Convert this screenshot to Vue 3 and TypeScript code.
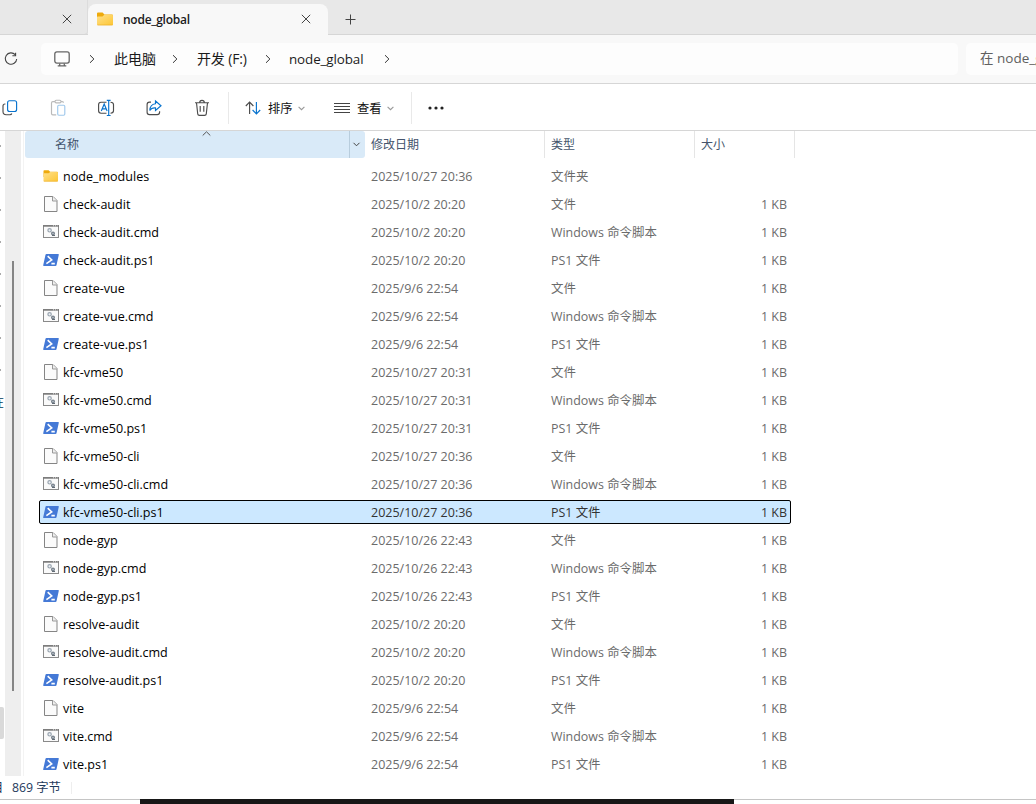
<script setup lang="ts">
type Kind = 'folder' | 'file' | 'cmd' | 'ps1'

interface Entry {
  name: string
  date: string
  kind: Kind
  selected?: boolean
}

const typeLabels: Record<Kind, string> = {
  folder: '文件夹',
  file: '文件',
  cmd: 'Windows 命令脚本',
  ps1: 'PS1 文件',
}

function scripts(base: string, date: string, selected?: Kind): Entry[] {
  return [
    { name: base, date, kind: 'file' },
    { name: base + '.cmd', date, kind: 'cmd' },
    { name: base + '.ps1', date, kind: 'ps1', selected: selected === 'ps1' },
  ]
}

const entries: Entry[] = [
  { name: 'node_modules', date: '2025/10/27 20:36', kind: 'folder' },
  ...scripts('check-audit', '2025/10/2 20:20'),
  ...scripts('create-vue', '2025/9/6 22:54'),
  ...scripts('kfc-vme50', '2025/10/27 20:31'),
  ...scripts('kfc-vme50-cli', '2025/10/27 20:36', 'ps1'),
  ...scripts('node-gyp', '2025/10/26 22:43'),
  ...scripts('resolve-audit', '2025/10/2 20:20'),
  ...scripts('vite', '2025/9/6 22:54'),
]
</script>

<template>
  <div class="window">
    <header class="tabs">
      <div class="tab-prev">
        <svg class="x" viewBox="0 0 10 10"><path d="M.8.8l8.4 8.4M9.2.8L.8 9.2" /></svg>
      </div>
      <div class="tab-active">
        <svg class="folder-lg" viewBox="0 0 16 14">
          <defs>
            <linearGradient id="fg" x1="0" y1="0" x2="1" y2="1">
              <stop offset="0" stop-color="#ffe08a" />
              <stop offset="1" stop-color="#fdc634" />
            </linearGradient>
          </defs>
          <path d="M0 1.5Q0 .5 1 .5h4.6l1.8 2H15q1 0 1 1V8H0z" fill="#eeaa0c" />
          <path d="M0 5.2q0-.8.8-.8h4.7l1.8-1.7H15q1 0 1 1v8.8q0 .8-1 .8H1q-1 0-1-1z" fill="url(#fg)" />
          <path d="M.2 12.7q.2.6.9.6h13.8q.8 0 .9-.6z" fill="#e8a21a" />
        </svg>
        <span class="tab-title">node_global</span>
        <svg class="x" viewBox="0 0 10 10"><path d="M.8.8l8.4 8.4M9.2.8L.8 9.2" /></svg>
      </div>
      <svg class="plus" viewBox="0 0 11 11"><path d="M5.5.5v10M.5 5.5h10" /></svg>
    </header>

    <div class="address">
      <svg class="refresh" viewBox="0 0 14 14">
        <path d="M11.2 2.7A5.7 5.7 0 1 0 12.7 7M11.6.7v3.1H8.4" />
      </svg>
      <nav class="crumbs">
        <svg class="monitor" viewBox="0 0 16 16">
          <rect x=".8" y=".9" width="14.4" height="11.2" rx="2" />
          <path d="M5.7 12.4v2.2M10.3 12.4v2.2M3.7 14.9h8.6" />
        </svg>
        <svg class="chev" viewBox="0 0 6 10"><path d="M1 1.2L4.9 5 1 8.8" /></svg>
        <span class="pc">此电脑</span>
        <svg class="chev" viewBox="0 0 6 10"><path d="M1 1.2L4.9 5 1 8.8" /></svg>
        <span class="drive">开发 (F:)</span>
        <svg class="chev" viewBox="0 0 6 10"><path d="M1 1.2L4.9 5 1 8.8" /></svg>
        <span class="current">node_global</span>
        <svg class="chev" viewBox="0 0 6 10"><path d="M1 1.2L4.9 5 1 8.8" /></svg>
      </nav>
      <div class="search">在 node_global 中搜索</div>
    </div>

    <div class="toolbar">
      <svg class="tool copy" viewBox="0 0 18 18">
        <path class="g" d="M4.400 5H4Q2 5 2 7v5.500q0 3.200 3.200 3.200H9q1.400 0 1.800-1.200" />
        <rect class="b" x="6.600" y="1.700" width="9" height="10.800" rx="2" />
      </svg>
      <svg class="tool faded" viewBox="0 0 18 18">
        <path class="g" d="M6 2.600H3.800Q2.500 2.600 2.500 4v10.600q0 1.300 1.300 1.300h3.400M12 2.600h1.300q1.200 0 1.200 1.200M6 2.500q0-1.300 1.200-1.300h3.600q1.200 0 1.200 1.300t-1.200 1.300H7.200Q6 3.800 6 2.500z" />
        <rect class="b" x="8.700" y="6.200" width="7.100" height="10" rx="1.200" />
      </svg>
      <svg class="tool" viewBox="0 0 18 18">
        <path class="g" d="M9.500 3.200H4Q1.600 3.200 1.600 5.600v6.200q0 2.400 2.400 2.400h5.500M13.500 3.200q3 0 3 2.400v6.200q0 2.400-3 2.400" />
        <path class="b" d="M4.300 12l2.900-7 2.900 7M5.200 9.800h4" />
        <path class="b" d="M11.700 1.500v15M9.800 1.400h3.800M9.800 16.500h3.800" />
      </svg>
      <svg class="tool" viewBox="0 0 18 18">
        <path class="g" d="M6 3.100H4.500Q2.100 3.100 2.100 5.500v7.700q0 2.400 2.400 2.400h7.700q2.400 0 2.400-2.400v-1" />
        <path class="b" d="M10.500 2l5.500 4.800-5.500 4.700V8.900Q6.500 8.500 4.800 11.500 5 5.500 10.500 4.800z" />
      </svg>
      <svg class="tool" viewBox="0 0 18 18">
        <path class="g" d="M2 3.700h14M6.700 3.500Q6.700 1.300 9 1.300t2.300 2.200M3.500 3.800l1.200 11q.2 1.500 1.700 1.500h5.200q1.500 0 1.700-1.500l1.200-11M7.200 7v5.700M10.800 7v5.700" />
      </svg>
      <i class="sep"></i>
      <svg class="sort" viewBox="0 0 16 14">
        <path class="g" d="M4.600 13V1.300M.8 5l3.800-3.900L8.400 5" />
        <path class="b" d="M11.400 1v11.700M7.600 9l3.800 3.900L15.200 9" />
      </svg>
      <span class="label">排序</span>
      <svg class="drop" viewBox="0 0 7 5"><path d="M.6.8l2.900 2.800L6.400.8" /></svg>
      <svg class="lines" viewBox="0 0 16 12"><path d="M0 1.500h16M0 4.500h16M0 7.500h16M0 10.500h16" /></svg>
      <span class="label">查看</span>
      <svg class="drop" viewBox="0 0 7 5"><path d="M.6.8l2.900 2.800L6.400.8" /></svg>
      <i class="sep sep-2"></i>
      <svg class="more" viewBox="0 0 16 4">
        <circle cx="2" cy="2" r="1.600" /><circle cx="8" cy="2" r="1.600" /><circle cx="14" cy="2" r="1.600" />
      </svg>
    </div>

    <main class="body">
      <aside class="tree">
        <div class="ticks"><i v-for="n in 8" :key="n"></i></div>
        <span class="tree-label">在</span>
        <div class="tree-active"></div>
      </aside>
      <div class="scroll"><div class="thumb"></div></div>
      <section class="list">
        <div class="head">
          <div class="h-name">
            <span>名称</span>
            <svg class="asc" viewBox="0 0 9 5"><path d="M.7 4.500L4.500.8l3.800 3.700" /></svg>
          </div>
          <div class="h-drop"><svg viewBox="0 0 7 5"><path d="M.5.8l3 3 3-3" /></svg></div>
          <div class="h-cell h-date">修改日期</div>
          <div class="h-cell">类型</div>
          <div class="h-cell">大小</div>
        </div>
        <div class="rows">
          <div v-for="e in entries" :key="e.name" class="row" :class="{ selected: e.selected }">
            <svg v-if="e.kind === 'folder'" class="icon" viewBox="0 0 16 16">
              <path d="M.5 3q0-.8.8-.8H5.600l1.500 1.600H14q1 0 1 1V9H.5z" fill="#eeaa0c" />
              <path d="M.5 6q0-.7.700-.7h4.500l1.400-1.200H14.300q.7 0 .7.700v8q0 .8-.8.8H1.300q-.8 0-.8-.8z" fill="url(#fg)" />
              <path d="M.8 13.200h13.900" stroke="#edae2b" stroke-width=".6" />
            </svg>
            <svg v-else-if="e.kind === 'file'" class="icon" viewBox="0 0 16 16">
              <path d="M1.500.5h8.500l4 4v11H1.500z" fill="#fbfbfb" stroke="#858585" />
              <path d="M9.500.5v4.500H14" fill="#eee" stroke="#999" />
            </svg>
            <svg v-else-if="e.kind === 'cmd'" class="icon" viewBox="0 0 16 16">
              <rect x=".5" y="1.500" width="15" height="12" fill="#fafafa" stroke="#8a8a8a" />
              <path d="M0 2h16" stroke="#777" stroke-width="1.400" />
              <path d="M10 1.800h4.500" stroke="#ddd" stroke-dasharray="1 1" />
              <circle cx="6.600" cy="6.300" r="1.700" fill="#eef2f5" stroke="#9aa5b0" stroke-width="1.200" />
              <circle cx="10" cy="9.500" r="1.400" fill="#bcc4cc" stroke="#76808b" stroke-width="1.200" />
              <path d="M9 11.500h3" stroke="#626b75" />
            </svg>
            <svg v-else class="icon" viewBox="0 0 16 16">
              <path d="M3.500 2h11.700q.8 0 .6.800l-2.300 10.400q-.2.800-1 .800H.8q-.8 0-.6-.8L2.500 2.800q.2-.8 1-.8z" fill="#4479d6" />
              <path d="M4.700 4.200l4 3.700-5.300 3.800M8.400 11.600h3.400" fill="none" stroke="#fff" stroke-width="1.600" />
            </svg>
            <span class="name">{{ e.name }}</span>
            <span class="date">{{ e.date }}</span>
            <span class="type">{{ typeLabels[e.kind] }}</span>
            <span class="size">{{ e.kind === 'folder' ? '' : '1 KB' }}</span>
          </div>
        </div>
      </section>
    </main>

    <footer class="status"><span class="cut">目</span><span class="bytes">869 字节</span><i></i></footer>
    <div class="below"><div class="dark"></div></div>
  </div>
</template>

<style>
body {
  margin: 0;
  background: #fff;
  overflow: hidden;
}
</style>

<style scoped>
.window {
  width: 1036px;
  height: 804px;
  overflow: hidden;
  display: flex;
  flex-direction: column;
  background: #fff;
  color: #1b1b1b;
  font-family: "Open Sans", "Noto Sans CJK SC", sans-serif;
  font-size: 12.45px;
  white-space: nowrap;
}
svg {
  display: block;
  flex: none;
  fill: none;
  stroke: #444;
  stroke-width: 1;
  overflow: visible;
}
.folder-lg, .icon { stroke: none; }

.tabs {
  box-sizing: border-box;
  height: 35px;
  flex: none;
  display: flex;
  background: linear-gradient(#e8e8e8 34px, #d6d6d6 34px);
}
.tab-prev {
  box-sizing: border-box;
  width: 88px;
  padding: 14px 0 0 62px;
  background: #e8e8e8;
  border-bottom: 1px solid #d6d6d6;
  border-right: 1px solid #dcdcdc;
  border-radius: 0 0 4px 0;
}
.x { width: 10px; height: 10px; }
.tab-active {
  box-sizing: border-box;
  width: 240px;
  height: 31px;
  margin-top: 4px;
  padding: 0 17px 1px 9px;
  display: flex;
  align-items: center;
  background: #f8f8f8;
  border-radius: 8px 8px 0 0;
}
.folder-lg { width: 16px; height: 14px; }
.tab-title {
  margin-left: 10px;
  flex: 1;
  font-size: 12px;
  font-weight: 600;
  letter-spacing: -0.25px;
}
.plus { width: 11px; height: 11px; margin: 14px 0 0 17px; }

.address {
  box-sizing: border-box;
  height: 49px;
  flex: none;
  display: flex;
  align-items: center;
  background: #f8f8f8;
  border-bottom: 1px solid #d6d6d6;
}
.refresh { width: 14px; height: 14px; margin-left: 4px; stroke-width: 1.1; }
.crumbs {
  box-sizing: border-box;
  width: 917px;
  flex: none;
  height: 32px;
  margin-left: 23px;
  padding-left: 13px;
  display: grid;
  grid-template-columns: 35px 25px 58px 25px 68px 24px 95px 6px;
  align-items: center;
  background: #fdfdfd;
  border-radius: 5px;
  font-size: 14px;
}
.monitor { width: 16px; height: 16px; stroke: #666; stroke-width: 1.3; }
.chev { width: 6px; height: 10px; stroke: #333; }
.pc { margin-top: -2px; }
.drive { margin-top: -2px; font-size: 14px; letter-spacing: -0.15px; }
.current { font-size: 13.4px; letter-spacing: -0.1px; }
.search {
  box-sizing: border-box;
  flex: 1;
  min-width: 0;
  height: 32px;
  margin-left: 8px;
  padding-left: 14px;
  line-height: 31px;
  overflow: hidden;
  background: #fdfdfd;
  border-radius: 5px 0 0 5px;
  color: #606060;
  font-size: 13.5px;
}

.toolbar {
  box-sizing: border-box;
  height: 47px;
  flex: none;
  display: flex;
  align-items: center;
  padding: 2px 0 0 1px;
  border-bottom: 1px solid #d6d6d6;
}
.tool { width: 18px; height: 18px; margin-right: 30px; }
.toolbar svg { stroke-width: 1.15; }
.g { stroke: #4c4c4c; }
.b { stroke: #0873ce; }
.faded { opacity: 0.38; }
.sep { width: 1px; height: 32px; margin-left: -13px; background: #e9e9e9; }
.sort { width: 16px; height: 14px; margin-left: 16px; }
.label { width: 24px; margin-left: 7px; font-size: 12.3px; color: #111; }
.toolbar .drop { width: 7px; height: 5px; margin-left: 6px; stroke: #999; }
.lines { width: 16px; height: 12px; margin-left: 29px; }
.toolbar .lines { stroke-width: 1; }
.sep-2 { margin-left: 17px; }
.more { width: 16px; height: 4px; margin-left: 16px; }
.toolbar .more { fill: #222; stroke: none; }

.body { height: 645px; flex: none; display: flex; }
.tree { width: 5px; overflow: hidden; display: flex; flex-direction: column; }
.ticks { height: 262px; padding-top: 14px; display: flex; flex-direction: column; gap: 30px; box-sizing: border-box; }
.ticks i { width: 1px; height: 2px; flex: none; background: #aaa; }
.tree-label {
  height: 20px;
  line-height: 20px;
  margin-left: -8px;
  font-size: 12px;
  color: #003c5c;
}
.tree-active { height: 32px; width: 4px; margin-top: 294px; flex: none; background: #d9d9d9; border-radius: 0 2px 2px 0; }
.scroll { box-sizing: border-box; width: 16px; padding: 130px 0 0 7px; background: #eee; }
.thumb { width: 2px; height: 430px; background: #858585; }
.list { flex: 1; margin-left: 2px; border-left: 1px solid #f3f3f3; }
.head {
  display: grid;
  grid-template-columns: 324px 16px 180px 150px 100px;
  height: 27px;
  margin-left: 1px;
  line-height: 27px;
  font-size: 12px;
  color: #44546c;
}
.h-name { position: relative; padding-left: 30px; background: #d9eaf8; border-radius: 3px 0 0 3px; }
.asc { position: absolute; left: 177px; top: 0; width: 9px; height: 5px; stroke: #555; }
.h-drop {
  box-sizing: border-box;
  display: flex;
  align-items: center;
  padding-left: 3px;
  background: #d9eaf8;
  border-left: 1px solid #b8cddd;
  border-radius: 0 3px 3px 0;
}
.h-drop svg { width: 7px; height: 5px; }
.h-cell { padding-left: 6px; border-right: 1px solid #e5e5e5; box-sizing: border-box; }
.rows { margin: 6px 0 0 15px; }
.row {
  box-sizing: border-box;
  width: 752px;
  height: 24px;
  margin-bottom: 4px;
  padding: 0 3px;
  border: 1px solid transparent;
  border-radius: 2px;
  display: grid;
  grid-template-columns: 20px 308px 180px 180px 56px;
  align-items: start;
  line-height: 24px;
  color: #6b6b6b;
}
.icon { width: 16px; height: 16px; margin-top: 3px; }
.name { color: #000; font-size: 12.55px; }
.date { font-size: 12.5px; }
.size { text-align: right; }
.selected { background: #cce8ff; border-color: #000; color: #333; }

.status {
  height: 23px;
  flex: none;
  display: flex;
  align-items: center;
  line-height: 23px;
  font-size: 12.3px;
  color: #1e395b;
}
.cut { width: 12px; margin-left: -9px; }
.bytes { margin-left: 9px; width: 59px; }
.status i { width: 1px; height: 12px; background: #eee; }
.below { height: 4px; border-top: 1px solid #c5c5c5; }
.dark { width: 594px; height: 5px; margin: -1px 0 0 140px; background: #171717; }
</style>
